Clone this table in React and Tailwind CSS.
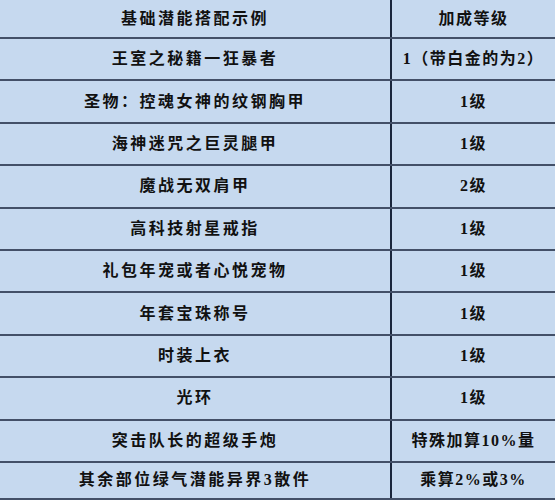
import React from "react";

const rows = [
  ["王室之秘籍一狂暴者", "1（带白金的为2）"],
  ["圣物：控魂女神的纹钢胸甲", "1级"],
  ["海神迷咒之巨灵腿甲", "1级"],
  ["魔战无双肩甲", "2级"],
  ["高科技射星戒指", "1级"],
  ["礼包年宠或者心悦宠物", "1级"],
  ["年套宝珠称号", "1级"],
  ["时装上衣", "1级"],
  ["光环", "1级"],
  ["突击队长的超级手炮", "特殊加算10%量"],
  ["其余部位绿气潜能异界3散件", "乘算2%或3%"],
];

function Row({ left, right, className }) {
  return (
    <div className={"flex border-b-2 border-[#435068] " + className}>
      <div className="w-[390px] flex items-center justify-center tracking-[2.5px]">{left}</div>
      <div className="w-[2px] bg-[#1a263c]" />
      <div className="flex-1 flex items-center justify-center tracking-[1.5px]">{right}</div>
    </div>
  );
}

export default function App() {
  return (
    <div
      className="w-[555px] h-[500px] bg-[#c6d9ef] flex flex-col text-[16px] font-bold text-[#111]"
      style={{ fontFamily: '"Liberation Serif", "Noto Sans CJK SC", serif' }}
    >
      <Row left="基础潜能搭配示例" right="加成等级" className="h-[39px]" />
      {rows.map((r, i) => (
        <Row
          key={i}
          left={r[0]}
          right={r[1]}
          className={i === rows.length - 1 ? "flex-1" : "h-[42.4px]"}
        />
      ))}
    </div>
  );
}
